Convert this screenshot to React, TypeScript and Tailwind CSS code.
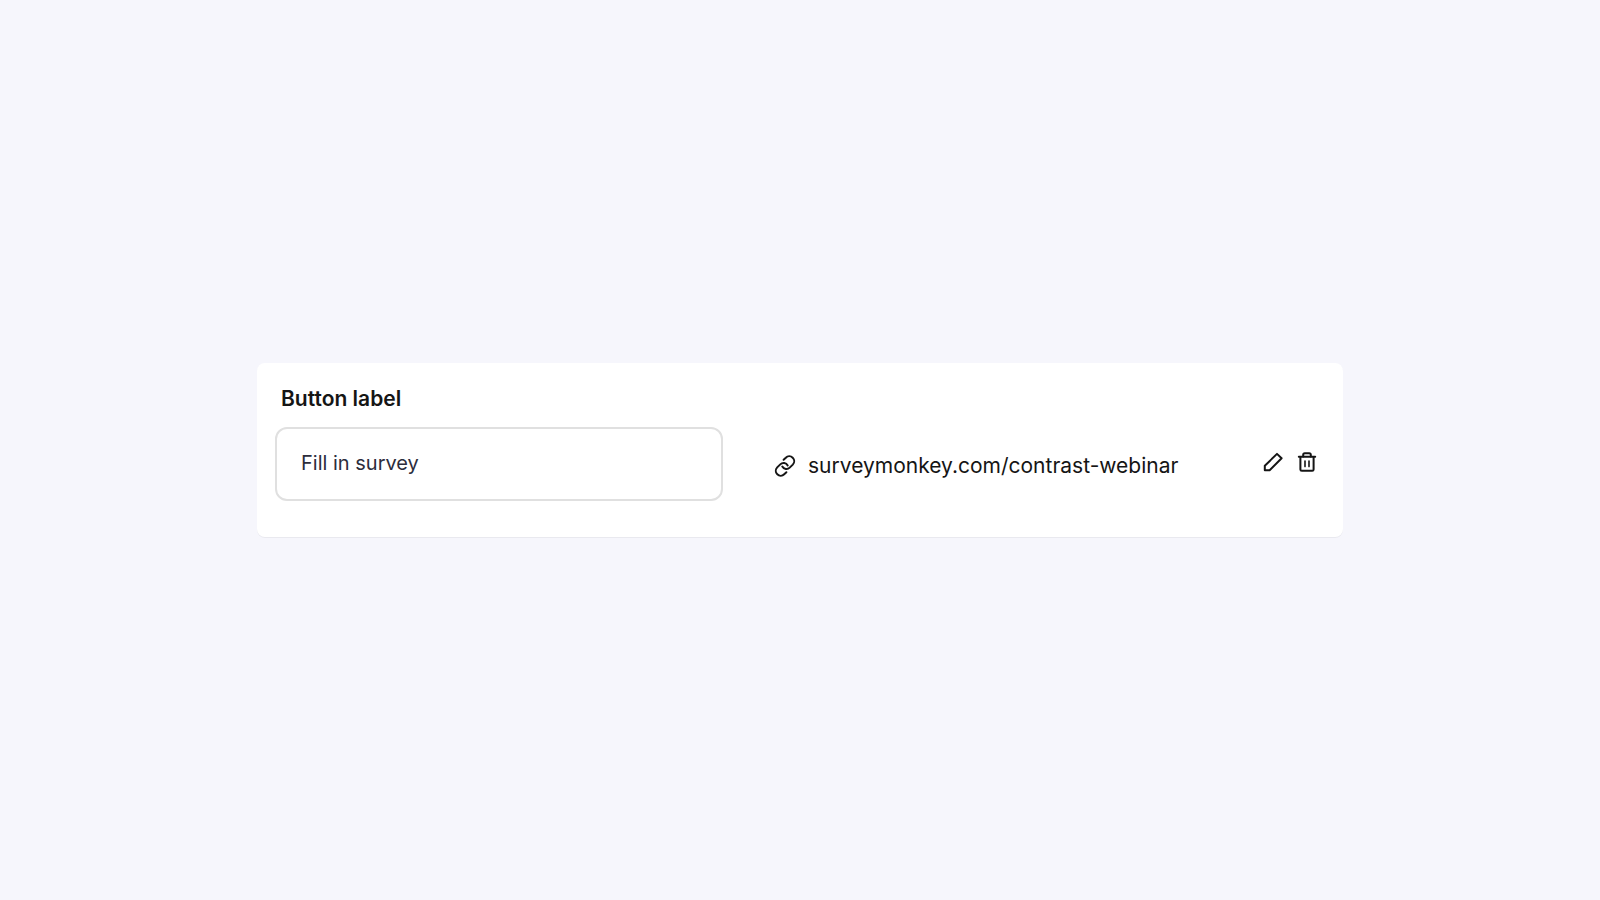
import React, { useState } from 'react';

const strokeProps = {
  fill: 'none',
  stroke: 'currentColor',
  strokeWidth: 2,
  strokeLinejoin: 'round',
  strokeLinecap: 'round',
} as const;

const LinkIcon = () => (
  <svg viewBox="0 0 22 22" className="size-[22px] shrink-0" aria-hidden="true" {...strokeProps}>
    <path d="M9.6 4.8 L11.8 2.8 a4.8 4.8 0 0 1 7 6.8 l-3.1 3 a4.7 4.7 0 0 1 -7.4 -1" />
    <path d="M12.4 17.2 L10.2 19.2 a4.8 4.8 0 0 1 -7 -6.8 l3.1 -3 a4.7 4.7 0 0 1 7.4 1" />
  </svg>
);

const PencilIcon = () => (
  <svg viewBox="0 0 20 20" className="size-5" aria-hidden="true" {...strokeProps}>
    <path d="M1.8 18.2 V13.8 L14 1.9 L18.6 6.3 L6.6 18.2 Z" />
  </svg>
);

const TrashIcon = () => (
  <svg viewBox="0 0 20 20" className="size-5" aria-hidden="true" {...strokeProps}>
    <path d="M1.8 4.8 H18.2" />
    <path d="M6.2 4.6 V2.8 A1.6 1.6 0 0 1 7.8 1.2 H12.2 A1.6 1.6 0 0 1 13.8 2.8 V4.6" />
    <path d="M3.4 5 V17.4 A1.4 1.4 0 0 0 4.8 18.8 H15.2 A1.4 1.4 0 0 0 16.6 17.4 V5" />
    <path d="M8 9 V14.6 M12 9 V14.6" strokeWidth="1.6" />
  </svg>
);

const App: React.FC = () => {
  const [label, setLabel] = useState('Fill in survey');

  return (
    <main className="flex min-h-screen items-center justify-center bg-[#f6f6fc] px-6 font-['Inter',sans-serif] text-[#151515]">
      <section className="w-full max-w-[1086px] rounded-lg bg-white pt-5 pr-[26px] pb-9 pl-[18px] shadow-2xs">
        <label htmlFor="button-label" className="mb-3 ml-1.5 block w-fit text-[21px] leading-8 font-semibold">
          Button label
        </label>

        <div className="flex items-center">
          <input
            id="button-label"
            value={label}
            onChange={e => setLabel(e.target.value)}
            className="h-[74px] w-[448px] min-w-0 rounded-xl border-2 border-[#e0e0e0] px-6 pb-0.5 text-xl text-[#2c2d3c]"
          />

          <a href="https://surveymonkey.com/contrast-webinar" className="ml-[51px] flex items-center gap-3 pt-1 text-[21px]">
            <LinkIcon />
            surveymonkey.com/contrast-webinar
          </a>

          <div className="ml-auto flex items-center gap-3.5 pb-1">
            <button type="button" aria-label="Edit link">
              <PencilIcon />
            </button>
            <button type="button" aria-label="Delete link">
              <TrashIcon />
            </button>
          </div>
        </div>
      </section>
    </main>
  );
};

export default App;
